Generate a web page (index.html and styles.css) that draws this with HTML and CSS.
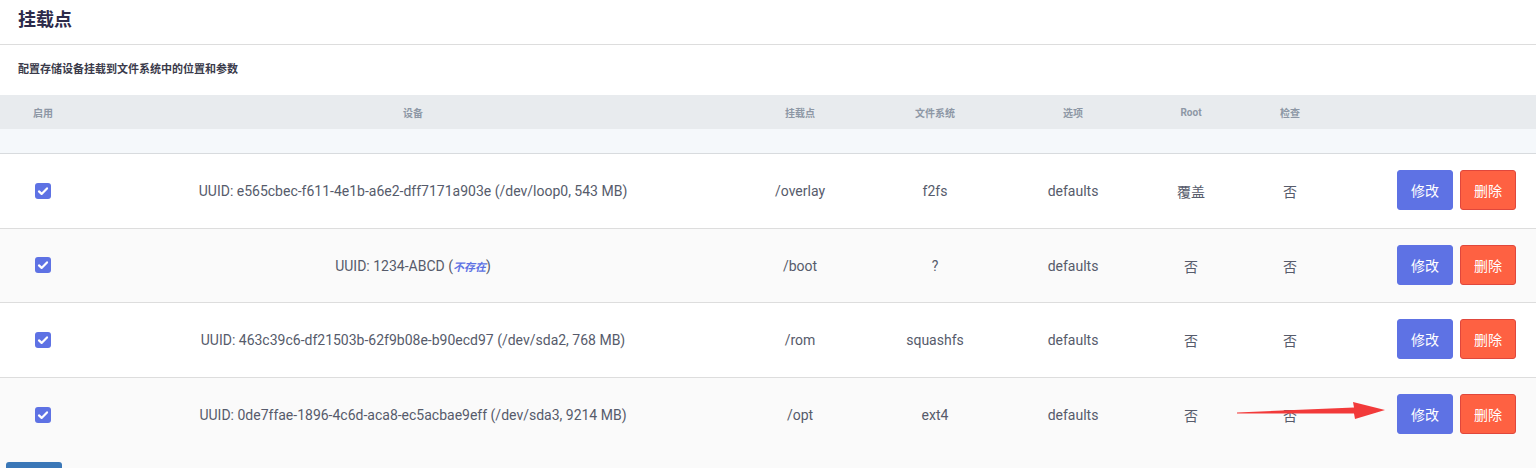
FILE: index.html
```html
<!DOCTYPE html>
<html lang="zh">
<head>
<meta charset="utf-8">
<title>挂载点</title>
<link rel="stylesheet" href="styles.css">
</head>
<body>
<div class="page">
  <h2 class="title">挂载点</h2>
  <div class="desc">配置存储设备挂载到文件系统中的位置和参数</div>
  <table class="tbl">
    <colgroup>
      <col class="c1"><col class="c2"><col class="c3"><col class="c4"><col class="c5"><col class="c6"><col class="c7"><col class="c8">
    </colgroup>
    <thead>
      <tr class="head">
        <th>启用</th><th>设备</th><th>挂载点</th><th>文件系统</th><th>选项</th><th>Root</th><th>检查</th><th></th>
      </tr>
      <tr class="spacer"><td colspan="8"></td></tr>
    </thead>
    <tbody>
      <tr class="row">
        <td><span class="cb"><svg viewBox="0 0 16 16" width="16" height="16"><path d="M4 8.4l2.6 2.5L12 5.4" fill="none" stroke="#fff" stroke-width="2.2" stroke-linecap="round" stroke-linejoin="round"/></svg></span></td>
        <td>UUID: e565cbec-f611-4e1b-a6e2-dff7171a903e (/dev/loop0, 543 MB)</td>
        <td>/overlay</td><td>f2fs</td><td>defaults</td><td>覆盖</td><td>否</td>
        <td class="act"><button class="btn edit">修改</button><button class="btn del">删除</button></td>
      </tr>
      <tr class="row alt">
        <td><span class="cb"><svg viewBox="0 0 16 16" width="16" height="16"><path d="M4 8.4l2.6 2.5L12 5.4" fill="none" stroke="#fff" stroke-width="2.2" stroke-linecap="round" stroke-linejoin="round"/></svg></span></td>
        <td>UUID: 1234-ABCD (<em class="missing">不存在</em>)</td>
        <td>/boot</td><td>?</td><td>defaults</td><td>否</td><td>否</td>
        <td class="act"><button class="btn edit">修改</button><button class="btn del">删除</button></td>
      </tr>
      <tr class="row">
        <td><span class="cb"><svg viewBox="0 0 16 16" width="16" height="16"><path d="M4 8.4l2.6 2.5L12 5.4" fill="none" stroke="#fff" stroke-width="2.2" stroke-linecap="round" stroke-linejoin="round"/></svg></span></td>
        <td>UUID: 463c39c6-df21503b-62f9b08e-b90ecd97 (/dev/sda2, 768 MB)</td>
        <td>/rom</td><td>squashfs</td><td>defaults</td><td>否</td><td>否</td>
        <td class="act"><button class="btn edit">修改</button><button class="btn del">删除</button></td>
      </tr>
      <tr class="row alt">
        <td><span class="cb"><svg viewBox="0 0 16 16" width="16" height="16"><path d="M4 8.4l2.6 2.5L12 5.4" fill="none" stroke="#fff" stroke-width="2.2" stroke-linecap="round" stroke-linejoin="round"/></svg></span></td>
        <td>UUID: 0de7ffae-1896-4c6d-aca8-ec5acbae9eff (/dev/sda3, 9214 MB)</td>
        <td>/opt</td><td>ext4</td><td>defaults</td><td>否</td><td>否</td>
        <td class="act"><button class="btn edit">修改</button><button class="btn del">删除</button></td>
      </tr>
    </tbody>
  </table>
  <div class="footer"><button class="add"></button></div>
  <svg class="arrow" width="160" height="30" viewBox="0 0 160 30"><polygon points="0,13.5 117,8.5 116,3 148,11 118,20 117,14.5 0,14.6" fill="#f23a3a"/></svg>
</div>
</body>
</html>
```

FILE: styles.css
```css
html, body {
  margin: 0;
  padding: 0;
  background: #fff;
}
body {
  font-family: Roboto, "Noto Sans CJK SC", sans-serif;
  color: #555a6a;
  height: 468px;
  overflow: hidden;
}
.page {
  position: relative;
  width: 1536px;
  height: 468px;
  overflow: hidden;
}
.title {
  margin: 0;
  height: 45px;
  box-sizing: border-box;
  padding: 8px 18px 0;
  font-size: 18px;
  line-height: 24px;
  font-weight: 700;
  color: #2d2b4a;
  border-bottom: 1px solid #dddddd;
}
.desc {
  height: 50px;
  box-sizing: border-box;
  padding: 17px 18px 0;
  font-size: 11px;
  line-height: 16px;
  font-weight: 700;
  color: #3a3a4a;
}
.tbl {
  width: 1536px;
  border-collapse: collapse;
  table-layout: fixed;
}
.c1 { width: 86px; }
.c2 { width: 654px; }
.c3 { width: 120px; }
.c4 { width: 150px; }
.c5 { width: 126px; }
.c6 { width: 110px; }
.c7 { width: 88px; }
.c8 { width: 202px; }
.head th {
  height: 34px;
  padding: 0;
  background: #e8ebee;
  font-size: 10px;
  font-weight: 700;
  color: #8d97a5;
  text-align: center;
  vertical-align: middle;
}
.spacer td {
  height: 24px;
  padding: 0;
  background: #f5f8fb;
  border-bottom: 1px solid #d8dbde;
}
.row td {
  height: 73.7px;
  padding: 0;
  text-align: center;
  vertical-align: middle;
  font-size: 14px;
  color: #565b6b;
  border-top: 1px solid #dddddd;
}
.row:first-child td { border-top: none; }
.row.alt td { background: #fafafa; }
.cb {
  display: inline-flex;
  width: 16px;
  height: 16px;
  border-radius: 3px;
  background: #5e72e4;
  vertical-align: middle;
  margin-top: -3px;
}
.missing {
  font-style: italic;
  font-weight: 700;
  font-size: 11px;
  color: #5e72e4;
}
.act {
  text-align: right !important;
  padding-right: 20px !important;
  white-space: nowrap;
}
.btn {
  display: inline-block;
  width: 56px;
  height: 40px;
  border-radius: 3px;
  font-family: Roboto, "Noto Sans CJK SC", sans-serif;
  font-size: 14px;
  color: #fff;
  vertical-align: middle;
  cursor: pointer;
  padding: 0;
  margin-top: -2px;
}
.btn.edit {
  background: #5e72e4;
  border: 1px solid #5e72e4;
}
.btn.del {
  background: #fe6142;
  border: 1px solid #e0473c;
  margin-left: 7px;
}
.footer {
  background: #fafafa;
  height: 20px;
  padding: 10px 0 0 6px;
  box-sizing: border-box;
}
.add {
  display: block;
  width: 56px;
  height: 30px;
  border: none;
  border-radius: 3px;
  background: #3a77b7;
}
.arrow {
  position: absolute;
  left: 1237px;
  top: 399px;
}
```
